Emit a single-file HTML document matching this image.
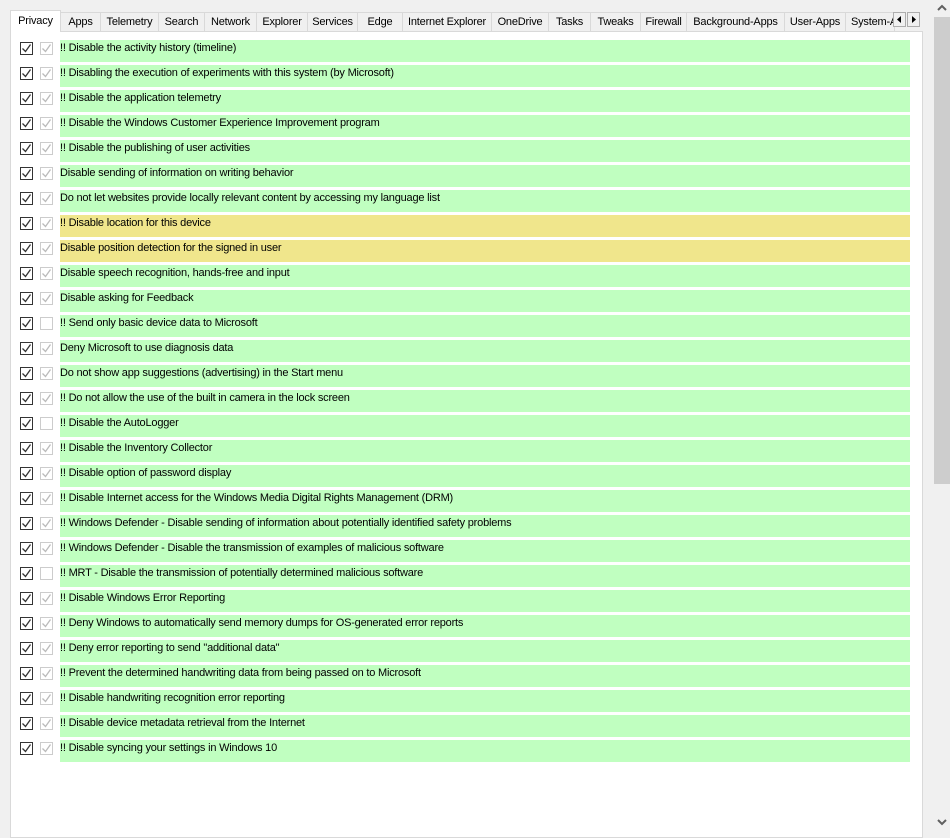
<!DOCTYPE html><html><head><style>
body{margin:0;width:950px;height:830px;background:#f0f0f0;position:relative;overflow:hidden;font-family:"Liberation Sans",sans-serif;font-size:11px;letter-spacing:-0.2px;color:#000}
.panel{position:absolute;left:10px;top:31px;width:911px;height:805px;background:#fff;border:1px solid #d9d9d9}
.tab{position:absolute;top:12px;height:19px;border:1px solid #d9d9d9;border-bottom:none;background:#f0f0f0;box-sizing:border-box;text-align:center;line-height:19px;white-space:nowrap;overflow:hidden}
.tab.sel{top:10px;height:22px;background:#fff;z-index:2;line-height:20px}
.row{position:absolute;left:60px;width:850px;height:21px;padding-top:1px;background:#c0ffc0;line-height:15px;white-space:nowrap}
.row.y{background:#f0e68c}
.cb{position:absolute;width:11px;height:11px;border:1px solid #333;background:#fff}
.cb.g{border-color:#ccc}
.cb svg{position:absolute;left:0;top:0}
.arr{position:absolute;top:12px;width:13px;height:15px;border:1px solid #adadad;background:#f0f0f0;box-sizing:border-box}
</style></head><body>
<div class="panel"></div>
<div class="tab sel" style="left:10px;width:51px">Privacy</div>
<div class="tab" style="left:60px;width:41px">Apps</div>
<div class="tab" style="left:100px;width:59px">Telemetry</div>
<div class="tab" style="left:158px;width:47px">Search</div>
<div class="tab" style="left:204px;width:53px">Network</div>
<div class="tab" style="left:256px;width:52px">Explorer</div>
<div class="tab" style="left:307px;width:51px">Services</div>
<div class="tab" style="left:357px;width:46px">Edge</div>
<div class="tab" style="left:402px;width:90px">Internet Explorer</div>
<div class="tab" style="left:491px;width:58px">OneDrive</div>
<div class="tab" style="left:548px;width:43px">Tasks</div>
<div class="tab" style="left:590px;width:51px">Tweaks</div>
<div class="tab" style="left:640px;width:47px">Firewall</div>
<div class="tab" style="left:686px;width:99px">Background-Apps</div>
<div class="tab" style="left:784px;width:62px">User-Apps</div>
<div class="tab" style="left:845px;width:50px;text-align:left;padding-left:5px">System-Apps</div>
<div class="arr" style="left:893px"><svg width="11" height="13"><path d="M7 3v7L3 6.5z" fill="#000"/></svg></div>
<div class="arr" style="left:907px"><svg width="11" height="13"><path d="M4 3v7l4-3.5z" fill="#000"/></svg></div>
<div style="position:absolute;left:933px;top:0;width:17px;height:830px;background:#f0f0f0"></div>
<div style="position:absolute;left:934px;top:17px;width:16px;height:467px;background:#cdcdcd"></div>
<svg style="position:absolute;left:937px;top:4px" width="10" height="8"><path d="M1 6l4-4 4 4" stroke="#606060" stroke-width="2" fill="none"/></svg>
<svg style="position:absolute;left:937px;top:818px" width="10" height="8"><path d="M1 2l4 4 4-4" stroke="#606060" stroke-width="2" fill="none"/></svg>
<div id="rows"></div>
<script>
var t=[["!! Disable the activity history (timeline)",0,1],["!! Disabling the execution of experiments with this system (by Microsoft)",0,1],["!! Disable the application telemetry",0,1],["!! Disable the Windows Customer Experience Improvement program",0,1],["!! Disable the publishing of user activities",0,1],["Disable sending of information on writing behavior",0,1],["Do not let websites provide locally relevant content by accessing my language list",0,1],["!! Disable location for this device",1,1],["Disable position detection for the signed in user",1,1],["Disable speech recognition, hands-free and input",0,1],["Disable asking for Feedback",0,1],["!! Send only basic device data to Microsoft",0,0],["Deny Microsoft to use diagnosis data",0,1],["Do not show app suggestions (advertising) in the Start menu",0,1],["!! Do not allow the use of the built in camera in the lock screen",0,1],["!! Disable the AutoLogger",0,0],["!! Disable the Inventory Collector",0,1],["!! Disable option of password display",0,1],["!! Disable Internet access for the Windows Media Digital Rights Management (DRM)",0,1],["!! Windows Defender - Disable sending of information about potentially identified safety problems",0,1],["!! Windows Defender - Disable the transmission of examples of malicious software",0,1],["!! MRT - Disable the transmission of potentially determined malicious software",0,0],["!! Disable Windows Error Reporting",0,1],["!! Deny Windows to automatically send memory dumps for OS-generated error reports",0,1],["!! Deny error reporting to send \"additional data\"",0,1],["!! Prevent the determined handwriting data from being passed on to Microsoft",0,1],["!! Disable handwriting recognition error reporting",0,1],["!! Disable device metadata retrieval from the Internet",0,1],["!! Disable syncing your settings in Windows 10",0,1]];
var h="";t.forEach(function(r,i){var y=40+25*i;
h+='<div class="row'+(r[1]?' y':'')+'" style="top:'+y+'px"></div>';
h+='<div class="cb" style="left:20px;top:'+(y+2)+'px"><svg width="11" height="11"><path d="M1.5 5.5l3 3 5-7" stroke="#333" stroke-width="1.3" fill="none"/></svg></div>';
h+='<div class="cb g" style="left:40px;top:'+(y+2)+'px">'+(r[2]?'<svg width="11" height="11"><path d="M1.5 5.5l3 3 5-7" stroke="#bbb" stroke-width="1.3" fill="none"/></svg>':'')+'</div>';});
document.getElementById("rows").innerHTML=h;
var rs=document.querySelectorAll(".row");rs.forEach(function(e,i){e.textContent=t[i][0];});
</script>
</body></html>
